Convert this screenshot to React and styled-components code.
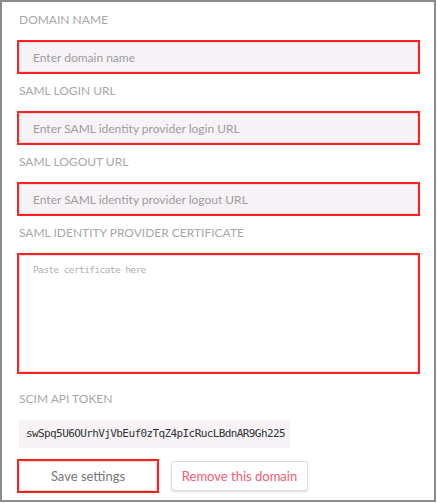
import React from "react";
import styled, { createGlobalStyle } from "styled-components";

const GlobalStyle = createGlobalStyle`
  html, body {
    margin: 0;
    background: #fff;
  }
  * {
    box-sizing: border-box;
  }
`;

const Frame = styled.div`
  width: 436px;
  height: 502px;
  border: 2px solid #8c8c8c;
  padding: 10px 14px 0 15px;
  font-family: Lato, "Open Sans", sans-serif;
`;

const Field = styled.div`
  display: flex;
  flex-direction: column;
  margin-bottom: ${(p) => p.$gap ?? 11}px;
`;

const Label = styled.div`
  height: 16px;
  line-height: 16px;
  padding-left: 2px;
  font-size: 12px;
  color: #a8a8a8;
  text-transform: uppercase;
  margin-bottom: ${(p) => p.$gap ?? 14}px;
`;

const Input = styled.input`
  margin: 0 2px;
  height: 30px;
  border: 1px solid #e2dde2;
  background: #f6f2f6;
  outline: 2px solid #ff2020;
  padding: 0 13px;
  font-family: Lato, "Open Sans", sans-serif;
  font-size: 12px;
  color: #444;

  &::placeholder {
    color: #9d9d9d;
  }
`;

const TextArea = styled.textarea`
  margin: 0 2px;
  height: 117px;
  resize: none;
  border: 1px solid #e2dde2;
  background: #fff;
  outline: 2px solid #ff2020;
  padding: 8px 13px;
  font-family: "DejaVu Sans Mono", "Liberation Mono", monospace;
  font-size: 9.5px;
  letter-spacing: -0.6px;
  color: #444;

  &::placeholder {
    color: #b0b0b0;
  }
`;

const Token = styled.div`
  align-self: flex-start;
  margin-left: 2px;
  width: 271px;
  height: 28px;
  line-height: 28px;
  padding-left: 7px;
  background: #f6f2f6;
  font-family: "DejaVu Sans Mono", "Liberation Mono", monospace;
  font-size: 11px;
  letter-spacing: -0.6px;
  color: #333;
`;

const Actions = styled.div`
  display: flex;
  align-items: center;
  gap: 10px;
  margin-top: 11px;
`;

const Marked = styled.div`
  display: flex;
  border: 2px solid ${(p) => (p.$on ? "#ff2020" : "transparent")};
`;

const Button = styled.button`
  height: 30px;
  width: ${(p) => p.$width}px;
  border: 1px solid #dcdcdc;
  border-radius: 3px;
  background: #fff;
  box-shadow: 0 1px 2px rgba(0, 0, 0, 0.12);
  font-family: Lato, "Open Sans", sans-serif;
  font-size: 13px;
  color: ${(p) => (p.$danger ? "#f25c72" : "#777")};
  cursor: pointer;
`;

const fields = [
  { label: "Domain name", placeholder: "Enter domain name" },
  { label: "SAML login URL", placeholder: "Enter SAML identity provider login URL" },
  { label: "SAML logout URL", placeholder: "Enter SAML identity provider logout URL" },
];

export default function App() {
  return (
    <>
      <GlobalStyle />
      <Frame>
        {fields.map((f) => (
          <Field key={f.label}>
            <Label>{f.label}</Label>
            <Input placeholder={f.placeholder} />
          </Field>
        ))}
        <Field $gap={19}>
          <Label>SAML identity provider certificate</Label>
          <TextArea placeholder="Paste certificate here" />
        </Field>
        <Field $gap={0}>
          <Label $gap={13}>SCIM API token</Label>
          <Token>swSpq5U6OUrhVjVbEuf0zTqZ4pIcRucLBdnAR9Gh225</Token>
        </Field>
        <Actions>
          <Marked $on>
            <Button $width={138}>Save settings</Button>
          </Marked>
          <Marked>
            <Button $width={137} $danger>Remove this domain</Button>
          </Marked>
        </Actions>
      </Frame>
    </>
  );
}
